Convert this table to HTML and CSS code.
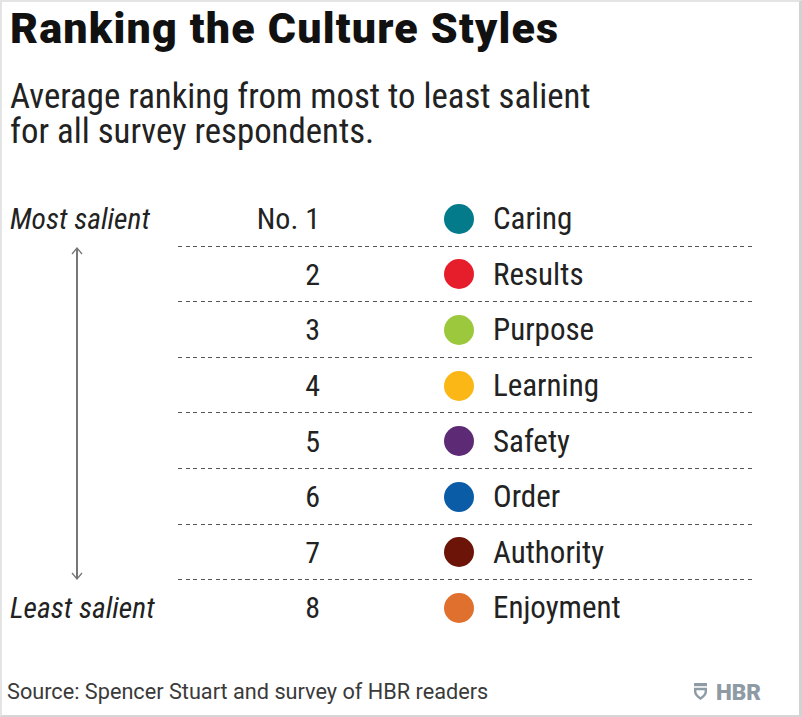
FILE: index.html
```html
<!DOCTYPE html>
<html lang="en">
<head>
<meta charset="utf-8">
<title>Ranking the Culture Styles</title>
<link rel="stylesheet" href="styles.css">
</head>
<body>
<div class="frame">
  <h1 class="title">Ranking the Culture Styles</h1>
  <p class="subtitle">Average ranking from most to least salient<br>for all survey respondents.</p>

  <div class="chart">
    <div class="scale">
      <div class="scale-label">Most salient</div>
      <div class="arrow">
        <svg class="head" width="12" height="8" viewBox="0 0 12 8"><path d="M1 7 L6 1 L11 7" fill="none" stroke="#777" stroke-width="1.3"/></svg>
        <div class="shaft"></div>
        <svg class="head" width="12" height="8" viewBox="0 0 12 8"><path d="M1 1 L6 7 L11 1" fill="none" stroke="#777" stroke-width="1.3"/></svg>
      </div>
      <div class="scale-label">Least salient</div>
    </div>

    <div class="rows">
      <div class="row"><span class="rank">No. 1</span><span class="dot dot-caring"></span><span class="name">Caring</span></div>
      <div class="row"><span class="rank">2</span><span class="dot dot-results"></span><span class="name">Results</span></div>
      <div class="row"><span class="rank">3</span><span class="dot dot-purpose"></span><span class="name">Purpose</span></div>
      <div class="row"><span class="rank">4</span><span class="dot dot-learning"></span><span class="name">Learning</span></div>
      <div class="row"><span class="rank">5</span><span class="dot dot-safety"></span><span class="name">Safety</span></div>
      <div class="row"><span class="rank">6</span><span class="dot dot-order"></span><span class="name">Order</span></div>
      <div class="row"><span class="rank">7</span><span class="dot dot-authority"></span><span class="name">Authority</span></div>
      <div class="row row-last"><span class="rank">8</span><span class="dot dot-enjoyment"></span><span class="name">Enjoyment</span></div>
    </div>
  </div>

  <div class="footer">
    <span class="source">Source: Spencer Stuart and survey of HBR readers</span>
    <span class="logo">
      <svg width="13" height="17" viewBox="0 0 13 17"><rect x="0" y="0" width="13" height="3.2" fill="#8e9aa4"/><path d="M1.2 6 H11.8 V8.8 C11.8 11.8 9.3 13.7 6.5 15.6 C3.7 13.7 1.2 11.8 1.2 8.8 Z" fill="none" stroke="#8e9aa4" stroke-width="2.4"/></svg>
      <span class="logo-text">HBR</span>
    </span>
  </div>
</div>
</body>
</html>
```
FILE: styles.css
```css
html, body {
  margin: 0;
  padding: 0;
  background: #ffffff;
}

.frame {
  box-sizing: border-box;
  width: 802px;
  height: 717px;
  border-top: 2px solid #e4e4e4;
  border-left: 2px solid #e4e4e4;
  border-right: 3px solid #d2d2d2;
  border-bottom: 2px solid #d6d6d6;
  padding: 1px 0 0 8px;
  display: flex;
  flex-direction: column;
  font-family: Roboto, "Liberation Sans", sans-serif;
  color: #222;
}

.title {
  margin: 0;
  font-size: 43px;
  line-height: 50px;
  font-weight: 900;
  color: #111;
  letter-spacing: 1.2px;
}

.subtitle {
  margin: 26px 0 0 0;
  font-size: 34.8px;
  line-height: 35px;
  font-weight: 400;
  font-stretch: condensed;
  color: #222;
}

.chart {
  display: flex;
  margin-top: 42px;
}

.scale {
  width: 168px;
  display: flex;
  flex-direction: column;
}

.scale-label {
  height: 55.6px;
  display: flex;
  align-items: center;
  font-size: 29.5px;
  font-style: italic;
  font-stretch: condensed;
  color: #222;
}

.arrow {
  flex: 1;
  display: flex;
  flex-direction: column;
  align-items: center;
  width: 12px;
  margin-left: 61px;
}

.head {
  display: block;
  flex: none;
}

.shaft {
  flex: 1;
  width: 1.4px;
  background: #777;
  margin: -7px 0;
}

.rows {
  width: 577px;
  display: flex;
  flex-direction: column;
}

.row {
  height: 55.6px;
  display: flex;
  align-items: center;
  font-size: 31px;
  font-stretch: condensed;
  color: #222;
  background: repeating-linear-gradient(to right, #555 0 4px, transparent 4px 7.5px) left bottom / 100% 1px no-repeat;
}

.row-last {
  background: none;
}

.rank {
  width: 142px;
  text-align: right;
  font-size: 30px;
}

.dot {
  width: 30px;
  height: 30px;
  border-radius: 50%;
  margin-left: 124px;
  flex: none;
}

.name {
  margin-left: 19px;
}

.dot-caring { background: #047b8b; }
.dot-results { background: #e61e2b; }
.dot-purpose { background: #9cc83d; }
.dot-learning { background: #fbb716; }
.dot-safety { background: #5d2a76; }
.dot-order { background: #0b5ca7; }
.dot-authority { background: #6c1407; }
.dot-enjoyment { background: #e0702d; }

.footer {
  margin-top: 44px;
  width: 751px;
  display: flex;
  align-items: center;
  justify-content: space-between;
}

.source {
  font-size: 21.7px;
  line-height: 24px;
  color: #3a3a3a;
  margin-left: -3px;
}

.logo {
  display: flex;
  align-items: center;
  gap: 9px;
}

.logo-text {
  font-family: Roboto, "Liberation Sans", sans-serif;
  font-weight: 900;
  font-size: 22.5px;
  line-height: 22px;
  color: #8e9aa4;
  letter-spacing: 0px;
}
```
